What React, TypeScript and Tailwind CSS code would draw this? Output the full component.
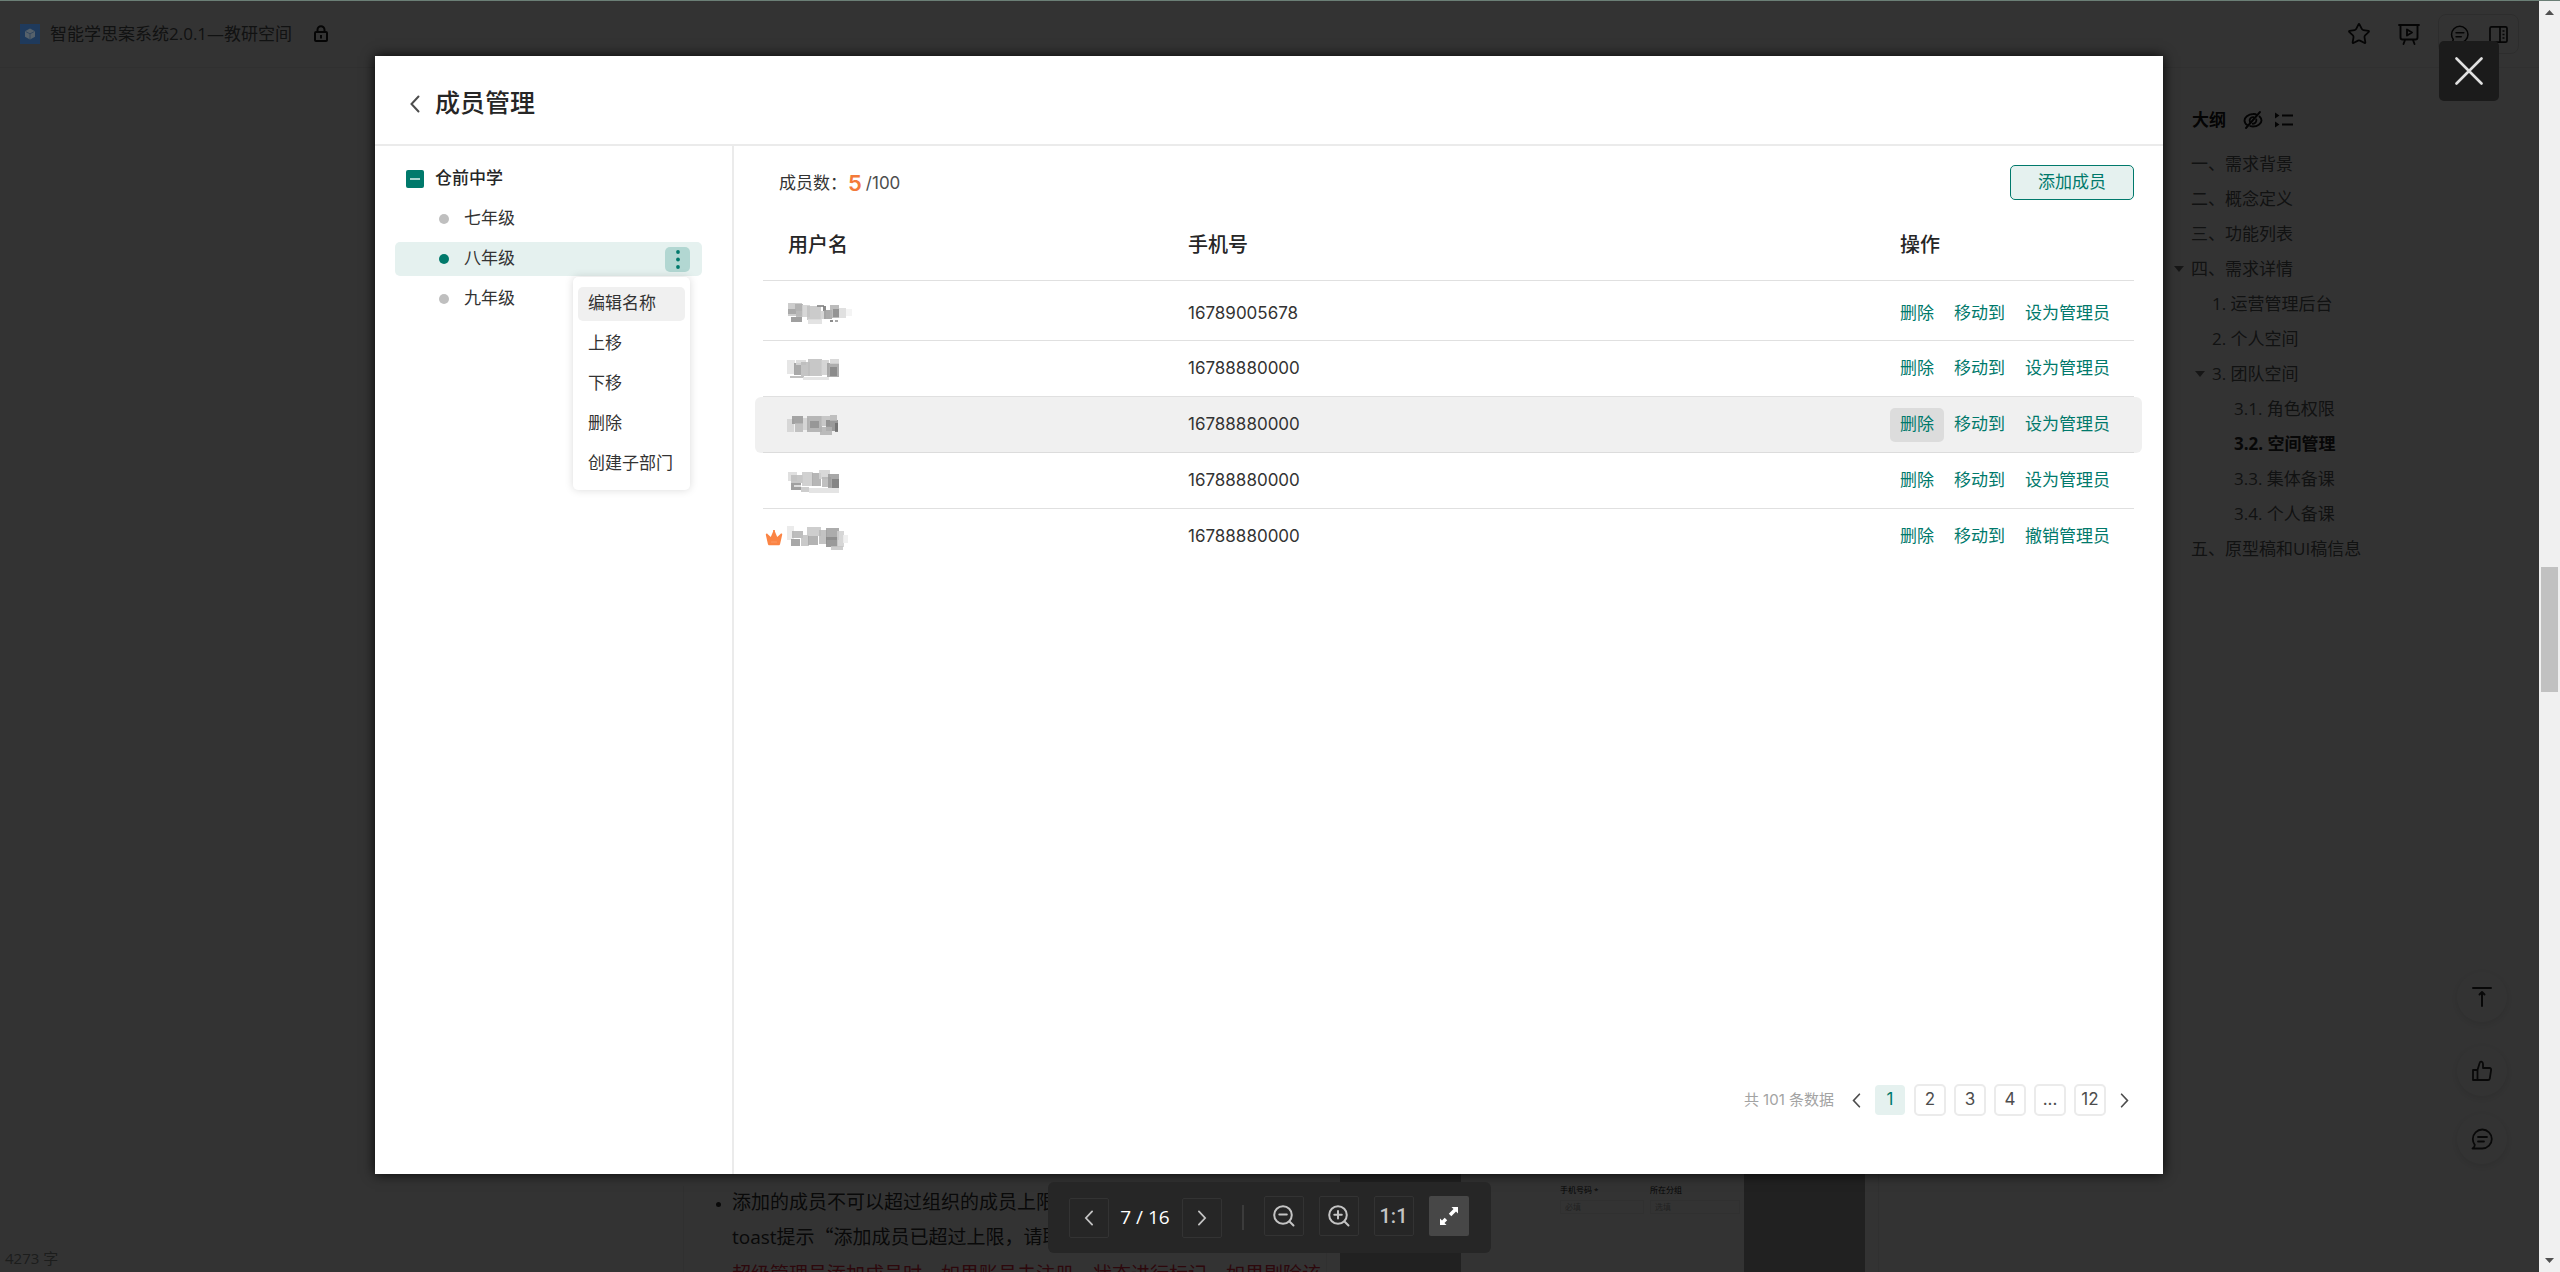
import React from "react";
import { Star } from "lucide-react";

const cjk = "font-['Inter','Noto_Sans_CJK_SC',sans-serif]";
const docFont = "font-['Open_Sans','Noto_Sans_CJK_SC',sans-serif]";

type OutlineItem = { label: string; level: 1 | 2 | 3; open?: boolean; current?: boolean };

const outline: OutlineItem[] = [
  { label: "一、需求背景", level: 1 },
  { label: "二、概念定义", level: 1 },
  { label: "三、功能列表", level: 1 },
  { label: "四、需求详情", level: 1, open: true },
  { label: "1. 运营管理后台", level: 2 },
  { label: "2. 个人空间", level: 2 },
  { label: "3. 团队空间", level: 2, open: true },
  { label: "3.1. 角色权限", level: 3 },
  { label: "3.2. 空间管理", level: 3, current: true },
  { label: "3.3. 集体备课", level: 3 },
  { label: "3.4. 个人备课", level: 3 },
  { label: "五、原型稿和UI稿信息", level: 1 },
];

const indent = { 1: "pl-0", 2: "pl-[21px]", 3: "pl-[43px]" };

/* x, y, width, height, grey level */
type Block = [number, number, number, number, string];

const members: { phone: string; admin?: boolean; hover?: boolean; blocks: Block[] }[] = [
  {
    phone: "16789005678",
    blocks: [
      [4, 3, 14, 13, "#c4c4c4"], [4, 9, 8, 5, "#a2a2a2"], [7, 17, 11, 5, "#8f8f8f"], [11, 4, 8, 7, "#adadad"],
      [12, 11, 7, 6, "#b4b4b4"], [18, 5, 8, 12, "#d0d0d0"], [23, 6, 14, 14, "#c2c2c2"], [24, 19, 14, 5, "#dedede"],
      [33, 5, 7, 2, "#888"], [39, 6, 3, 5, "#777"], [36, 11, 6, 8, "#cfcfcf"], [40, 10, 8, 9, "#9c9c9c"],
      [46, 5, 9, 13, "#b0b0b0"], [49, 9, 6, 8, "#8d8d8d"], [46, 20, 3, 2, "#777"], [51, 20, 3, 2, "#999"],
      [55, 8, 7, 10, "#dadada"], [62, 9, 6, 7, "#f2f2f2"],
    ],
  },
  {
    phone: "16788880000",
    blocks: [
      [3, 5, 8, 14, "#e2e2e2"], [10, 8, 7, 12, "#9a9a9a"], [12, 5, 10, 5, "#d8d8d8"], [17, 7, 9, 14, "#bababa"],
      [24, 4, 14, 17, "#bdbdbd"], [37, 5, 8, 15, "#cecece"], [43, 8, 12, 14, "#9f9f9f"], [46, 12, 7, 9, "#858585"],
      [6, 21, 14, 2, "#b5b5b5"], [19, 22, 26, 3, "#e0e0e0"], [46, 4, 9, 5, "#d2d2d2"],
    ],
  },
  {
    phone: "16788880000",
    hover: true,
    blocks: [
      [3, 8, 7, 13, "#d2d2d2"], [8, 5, 11, 8, "#979797"], [11, 12, 8, 9, "#b8b8b8"], [19, 7, 6, 12, "#d0d0d0"],
      [23, 5, 15, 16, "#ababab"], [26, 10, 9, 7, "#929292"], [37, 5, 9, 10, "#c0c0c0"], [42, 9, 12, 11, "#8a8a8a"],
      [46, 4, 7, 6, "#b6b6b6"], [36, 16, 12, 8, "#b1b1b1"], [51, 12, 3, 9, "#6d6d6d"],
    ],
  },
  {
    phone: "16788880000",
    blocks: [
      [4, 5, 9, 9, "#dadada"], [7, 8, 12, 8, "#bdbdbd"], [7, 16, 10, 7, "#8f8f8f"], [10, 18, 7, 2, "#e8e8e8"],
      [18, 5, 11, 14, "#c9c9c9"], [28, 6, 9, 13, "#a9a9a9"], [35, 3, 11, 9, "#d2d2d2"], [38, 10, 9, 10, "#b5b5b5"],
      [44, 7, 11, 14, "#999"], [48, 12, 7, 9, "#7f7f7f"], [17, 20, 8, 5, "#c4c4c4"], [25, 21, 30, 5, "#dfdfdf"],
    ],
  },
  {
    phone: "16788880000",
    admin: true,
    blocks: [
      [3, 3, 7, 14, "#e8e8e8"], [8, 8, 11, 7, "#b2b2b2"], [7, 16, 9, 7, "#999"], [17, 12, 8, 11, "#c0c0c0"],
      [23, 4, 14, 9, "#c6c6c6"], [24, 13, 10, 9, "#a6a6a6"], [35, 7, 8, 14, "#b9b9b9"], [42, 5, 13, 12, "#9d9d9d"],
      [42, 14, 12, 10, "#888"], [53, 8, 7, 16, "#cfcfcf"], [59, 12, 5, 8, "#ededed"], [47, 23, 12, 4, "#c4c4c4"],
    ],
  },
];

function MaskedName({ blocks }: { blocks: Block[] }) {
  return (
    <svg className="-ml-1 h-7 w-[70px]" viewBox="0 0 70 28" role="img" aria-label="用户名已隐藏">
      {blocks.map(([x, y, w, h, fill], i) => (
        <rect key={i} x={x} y={y} width={w} height={h} fill={fill} opacity={0.85} />
      ))}
    </svg>
  );
}

function Chevron({ dir, className }: { dir: "left" | "right"; className: string }) {
  return (
    <svg className={className} viewBox="0 0 10 18" fill="none" stroke="currentColor" strokeWidth="2" strokeLinecap="round">
      <path d={dir === "left" ? "M8.5 1.5 1.5 9l7 7.5" : "M1.5 1.5 8.5 9l-7 7.5"} />
    </svg>
  );
}

function CommentIcon({ className }: { className: string }) {
  return (
    <svg className={className} viewBox="0 0 22 22" fill="none" stroke="currentColor" strokeWidth="1.8" strokeLinecap="round" strokeLinejoin="round">
      <path d="M1.5 20.5h9.8a9.5 9.5 0 1 0-9.5-9.5c0 2.3.7 4.2 2 5.9 0 1.4-.8 2.6-2.3 3.6Z" />
      <path d="M7 9h9M7 13.5h6" />
    </svg>
  );
}

function DocumentPage() {
  return (
    <div className={`flex h-full flex-col overflow-hidden bg-white text-[17px] ${docFont}`}>
      <header className="flex h-[67px] shrink-0 items-center border-b border-[#f0f0f0] pl-5 pr-5">
        <span className="size-5" />
        <h1 className="ml-2.5 text-[#585a5a]">智能学思案系统2.0.1—教研空间</h1>
        <svg className="ml-5 size-[18px] text-[#1a1a1a]" viewBox="0 0 18 18" fill="none" stroke="currentColor" strokeWidth="2">
          <rect x="3" y="7" width="12" height="9" rx="1" />
          <path d="M5.5 7V4.8a3.5 3.5 0 0 1 7 0V7M9 10v3.5" />
        </svg>
        <div className="ml-auto flex items-center text-[#1a1a1a]">
          <button aria-label="收藏"><Star className="size-6" strokeWidth={1.8} /></button>
          <button aria-label="演示" className="ml-[26px]">
            <svg className="size-6" viewBox="0 0 24 24" fill="none" stroke="currentColor" strokeWidth="1.9" strokeLinecap="round" strokeLinejoin="round">
              <path d="M2 3h20M3.500 3v12.500a2 2 0 0 0 2 2h13a2 2 0 0 0 2-2V3M8 18l-1.500 4M16 18l1.500 4" />
              <path d="m10 7.500 5 3-5 3Z" />
            </svg>
          </button>
          <div className="ml-[17px] flex h-10 items-center rounded-lg border border-[#e0e0e0] pl-[11px] pr-[10px]">
            <button aria-label="评论"><CommentIcon className="size-[19px]" /></button>
            <button aria-label="侧栏" className="ml-5">
              <svg className="size-[19px]" viewBox="0 0 19 19" fill="none" stroke="currentColor" strokeWidth="1.7">
                <rect x="1" y="1.8" width="17" height="15.4" rx="1.5" />
                <path d="M11 2v15M13.500 6h2M13.500 9.500h2M13.500 13h2" />
              </svg>
            </button>
          </div>
        </div>
      </header>

      <div className="flex min-h-0 flex-1">
        <main className="flex min-w-0 flex-1 flex-col justify-end overflow-hidden">
          <div className="flex items-end pl-[683px] pr-[295px]">
            <div className="w-[644px] shrink-0 border-x border-[#eee] pl-[30px] text-[19px] leading-[33px] whitespace-nowrap text-[#303030]">
              <ul className="list-disc pl-[18px] marker:text-[13px]">
                <li>
                  添加的成员不可以超过组织的成员上限
                  <br />
                  toast提示<span className="font-['Noto_Sans_CJK_SC',sans-serif]">“</span>添加成员已超过上限，请联系管理员
                </li>
              </ul>
              <p className="mt-1 h-3.5 pl-[18px] text-[#df2a3f]">
                超级管理员添加成员时，如果账员未注册，状态进行标记，如果剔除该
              </p>
            </div>
            <div className="min-w-0 flex-1 border-r border-[#eee] px-[13px]">
              <div className="flex h-[98px] bg-[#a5a5a5] px-[121px]">
                <div className="flex flex-1 justify-end gap-1.5 bg-white pr-1 pt-3 text-[8px] leading-none text-[#222]">
                  <div className="w-[84px]">
                    <span>手机号码 *</span>
                    <div className="mt-1.5 h-[14px] border border-[#eee] px-1 leading-3 text-[#aaa]">必填</div>
                  </div>
                  <div className="w-[90px]">
                    <span>所在分组</span>
                    <div className="mt-1.5 h-[14px] border border-[#eee] px-1 leading-3 text-[#aaa]">选填</div>
                  </div>
                </div>
              </div>
            </div>
          </div>
        </main>

        <aside className="flex w-[365px] shrink-0 flex-col pt-[38px] text-[#585a5a]">
          <div className="flex h-7 items-center pl-[18px] text-[#151515]">
            <h2 className="font-bold">大纲</h2>
            <button aria-label="隐藏大纲" className="ml-[17px]">
              <svg className="size-5" viewBox="0 0 20 20" fill="none" stroke="currentColor" strokeWidth="1.9" strokeLinecap="round">
                <path d="M17 2 3 18M12.800 4.200A9 9 0 0 0 10 4c-5 0-8.500 4-8.500 6.500 0 1.700 1 3.500 3 4.800M16.500 6.500c1.300 1.200 2 2.700 2 4 0 2.500-3.500 6-8.500 6-1 0-1.800-.1-2.600-.3" />
                <path d="M7 12a3.300 3.300 0 0 1 3.500-4.800M13.300 9.500a3.400 3.400 0 0 1-3.500 4.200" />
              </svg>
            </button>
            <button aria-label="展开层级" className="ml-3">
              <svg className="size-[18px]" viewBox="0 0 18 18" fill="currentColor">
                <path d="M0 1.500 4.500 4.500 0 7.500ZM0 10.500l4.500 3-4.500 3ZM7 3.500h11v2H7ZM7 12.500h11v2H7Z" />
              </svg>
            </button>
          </div>
          <nav className="mt-3 pl-[17px]">
            <ul>
              {outline.map((item) => (
                <li key={item.label} className={`flex h-[35px] items-center ${indent[item.level]}`}>
                  {item.open && (
                    <svg className="-ml-[17px] mr-[7px] h-[6px] w-[10px]" viewBox="0 0 10 6" fill="#707070">
                      <path d="M0 0h10L5 6Z" />
                    </svg>
                  )}
                  <a href="#" className={item.current ? "font-bold text-[#262626]" : ""}>{item.label}</a>
                </li>
              ))}
            </ul>
          </nav>
        </aside>
      </div>

      <span className="absolute bottom-0.5 left-[5px] text-[15px] leading-6 text-[#8a8f8d]">4273 字</span>

      <div className="absolute bottom-[108px] right-[32px] flex flex-col text-[#2a2a2a]">
        <button aria-label="返回顶部" className="flex size-[50px] items-center justify-center rounded-full bg-white shadow-[0_2px_10px_rgba(0,0,0,0.12)]">
          <svg className="size-[22px]" viewBox="0 0 22 22" fill="none" stroke="currentColor" strokeWidth="2" strokeLinecap="round" strokeLinejoin="round">
            <path d="M2 2h18M11 20V6.500M8.500 8.500 11 6l2.500 2.500" />
          </svg>
        </button>
        <button aria-label="点赞" className="mt-6 flex size-[50px] items-center justify-center rounded-full bg-white shadow-[0_2px_10px_rgba(0,0,0,0.12)]">
          <svg className="size-[22px]" viewBox="0 0 22 22" fill="none" stroke="currentColor" strokeWidth="1.8" strokeLinejoin="round">
            <path d="M2 10h4.500v10H2ZM6.500 10 8.800 2.500c.2-.8 1-1 1.700-.8 1 .4 1.500 1.200 1.500 2.200V8h6.500c1.200 0 1.800 1 1.600 2l-1.300 8.500c-.2 1-.8 1.500-1.700 1.500H6.500" />
          </svg>
        </button>
        <button aria-label="评论列表" className="mt-[18px] flex size-[50px] items-center justify-center rounded-full bg-white shadow-[0_2px_10px_rgba(0,0,0,0.12)]">
          <CommentIcon className="size-[22px]" />
        </button>
      </div>
    </div>
  );
}

const menuItems = ["编辑名称", "上移", "下移", "删除", "创建子部门"];
const grades = ["七年级", "八年级", "九年级"];

function Departments() {
  return (
    <aside className="w-[359px] shrink-0 border-r-2 border-[#ebebeb] pl-5 pr-[30px] pt-4">
      <div className="flex h-[34px] items-center pl-[11px]">
        <button aria-label="收起" className="flex size-[18px] items-center justify-center rounded-xs bg-[#00796b]">
          <span className="h-0.5 w-2.5 bg-[#a6d2cc]" />
        </button>
        <span className="ml-[11px] font-medium text-[#262626]">仓前中学</span>
      </div>
      <ul className="mt-1.5 flex flex-col gap-1.5">
        {grades.map((grade) => {
          const active = grade === "八年级";
          return (
            <li
              key={grade}
              className={
                active
                  ? "relative z-10 flex h-[34px] items-center rounded-[5px] bg-[#e5f1ef] pl-[44px] pr-3"
                  : "flex h-[34px] items-center pl-[44px] pr-3"
              }
            >
              <span className={active ? "size-2.5 rounded-full bg-[#00796b]" : "size-2.5 rounded-full bg-[#bfbfbf]"} />
              <button className="ml-[15px]">{grade}</button>
              {active && (
                <>
                  <button aria-label="更多" className="ml-auto flex size-[25px] items-center justify-center rounded-[5px] bg-[#b2d7d2]">
                    <svg className="h-[19px] w-1" viewBox="0 0 4 19" fill="#00796b">
                      <circle cx="2" cy="2" r="1.9" />
                      <circle cx="2" cy="9.5" r="1.9" />
                      <circle cx="2" cy="17" r="1.9" />
                    </svg>
                  </button>
                  <div role="menu" className="absolute right-3 top-[35px] flex w-[117px] flex-col gap-1.5 rounded-[5px] bg-white px-[5px] pb-[9px] pt-2.5 shadow-[0_0_8px_rgba(0,0,0,0.15)]">
                    {menuItems.map((label, i) => (
                      <button
                        role="menuitem"
                        key={label}
                        className={
                          i === 0
                            ? "h-[34px] rounded-[5px] bg-[#f0f0f0] pl-2.5 text-left whitespace-nowrap"
                            : "h-[34px] rounded-[5px] pl-2.5 text-left whitespace-nowrap"
                        }
                      >
                        {label}
                      </button>
                    ))}
                  </div>
                </>
              )}
            </li>
          );
        })}
      </ul>
    </aside>
  );
}

function MemberTable() {
  return (
    <table className="mt-2.5 w-full table-fixed border-separate border-spacing-0 text-left">
      <colgroup>
        <col className="w-[31%]" />
        <col />
        <col className="w-[244px]" />
      </colgroup>
      <thead>
        <tr className="h-[71px] text-xl text-[#262626] [&>th]:border-b [&>th]:border-[#e0e0e0] [&>th]:p-0 [&>th]:font-medium">
          <th className="!pl-[25px]">用户名</th>
          <th>手机号</th>
          <th className="!pl-2.5">操作</th>
        </tr>
      </thead>
      <tbody>
        {members.map((m, i) => {
          const last = i === members.length - 1;
          const line = last ? "" : m.hover ? "border-b border-[#dcdcdc]" : "border-b border-[#e0e0e0]";
          const pad = i === 0 ? "pt-1.5" : "";
          return (
            <tr key={i} className={i === 0 ? "h-[60px]" : m.hover ? "h-14 bg-[#f0f0f0]" : "h-14"}>
              <td
                className={`${line} ${pad} ${
                  m.hover
                    ? "relative before:absolute before:-left-2 before:-bottom-px before:top-0 before:w-2 before:rounded-l-md before:bg-[#f0f0f0]"
                    : ""
                }`}
              >
                <div className="flex items-center">
                  <span className="w-[25px] pl-0.5">
                    {m.admin && (
                      <svg className="h-[17px] w-[18px]" viewBox="0 0 18 17" role="img" aria-label="管理员">
                        <path
                          d="M1.3 4.8c.4-.3.8-.2 1.2.1L5.8 8l2.300-5.600a1 1 0 1 1 1.800 0L12.200 8l3.300-3.100c.9-.6 2-.2 1.700.9l-2.100 9.200c-.2.9-.7 1.300-1.500 1.300H4.400c-.8 0-1.300-.4-1.500-1.300L.8 5.800c-.1-.4.1-.8.5-1Z"
                          fill="#fb8444"
                        />
                        <path d="M6.500 13h5" stroke="#fb9a66" strokeWidth="1.2" strokeLinecap="round" />
                      </svg>
                    )}
                  </span>
                  <MaskedName blocks={m.blocks} />
                </div>
              </td>
              <td className={`${line} ${pad}`}>{m.phone}</td>
              <td
                className={`${line} ${pad} ${
                  m.hover
                    ? "relative before:absolute before:-right-2 before:-bottom-px before:top-0 before:w-2 before:rounded-r-md before:bg-[#f0f0f0]"
                    : ""
                }`}
              >
                <div className="flex whitespace-nowrap text-[#00796b]">
                  <button className={m.hover ? "h-[34px] rounded-[5px] bg-[#dcdcdc] px-2.5" : "h-[34px] px-2.5"}>删除</button>
                  <button className="h-[34px] px-2.5">移动到</button>
                  <button className="h-[34px] px-2.5">{m.admin ? "撤销管理员" : "设为管理员"}</button>
                </div>
              </td>
            </tr>
          );
        })}
      </tbody>
    </table>
  );
}

function Pagination() {
  return (
    <nav aria-label="分页" className="mt-auto flex items-center gap-2 self-end text-[#4d4d4d]">
      <span className="mr-1 text-[15px] text-[#a3a3a3]">共 101 条数据</span>
      <button aria-label="上一页" className="flex w-5 justify-center"><Chevron dir="left" className="h-[15px] w-[9px]" /></button>
      {["1", "2", "3", "4", "...", "12"].map((p) => (
        <button
          key={p}
          className={
            p === "1"
              ? "size-8 rounded-[5px] border border-transparent bg-[#e5f1ef] bg-clip-padding text-[#00796b]"
              : "size-8 rounded-[5px] border-2 border-[#ebebeb]"
          }
        >
          {p}
        </button>
      ))}
      <button aria-label="下一页" className="flex w-5 justify-center"><Chevron dir="right" className="h-[15px] w-[9px]" /></button>
    </nav>
  );
}

function MemberDialog() {
  return (
    <section
      role="dialog"
      aria-label="成员管理"
      className={`flex min-h-0 flex-1 flex-col bg-white text-[17px] text-[#333] shadow-[0_0_12px_rgba(0,0,0,0.9)] ${cjk}`}
    >
      <header className="flex h-[90px] shrink-0 items-center border-b-2 border-[#ebebeb] pl-[35px] pt-2">
        <button aria-label="返回" className="text-[#4d4d4d]"><Chevron dir="left" className="h-[18px] w-2.5" /></button>
        <h2 className="ml-[15px] text-[25px] font-medium text-[#262626]">成员管理</h2>
      </header>
      <div className="flex min-h-0 flex-1">
        <Departments />
        <div className="flex min-w-0 flex-1 flex-col pb-[58px] pl-[29px] pr-[29px] pt-[19px]">
          <div className="flex h-[35px] items-center justify-between pl-4">
            <p className="flex items-center pt-0.5">
              成员数：
              <strong className="ml-px text-[22px] font-semibold text-[#f37a3a]">5</strong>
              <span className="ml-1 text-[#4d4d4d]">/100</span>
            </p>
            <button className="h-[35px] w-[124px] rounded-[5px] border border-[#00796b] bg-[#e5f1ef] pt-px text-[#00796b]">添加成员</button>
          </div>
          <MemberTable />
          <Pagination />
        </div>
      </div>
    </section>
  );
}

const toolButton = "flex size-10 items-center justify-center rounded-xs border border-[#333]";

function ViewerToolbar() {
  return (
    <div className={`flex h-[71px] items-center rounded-md bg-[#262626] pl-[21px] pr-[22px] text-[#c4c4c4] ${docFont}`}>
      <button aria-label="上一张" className={toolButton}><Chevron dir="left" className="h-4 w-2.5" /></button>
      <span className="w-[73px] text-center text-[19px] text-white">7 / 16</span>
      <button aria-label="下一张" className={toolButton}><Chevron dir="right" className="h-4 w-2.5" /></button>
      <span className="mx-5 h-[25px] w-0.5 bg-[#3b3b3b]" />
      <div className="flex gap-[15px] pb-[3px]">
        <button aria-label="缩小" className={toolButton}>
          <svg className="size-[22px]" viewBox="0 0 22 22" fill="none" stroke="currentColor" strokeWidth="2" strokeLinecap="round">
            <circle cx="10" cy="10" r="8.8" />
            <path d="m16.500 16.500 4 4M6.300 9.500h7.500" />
          </svg>
        </button>
        <button aria-label="放大" className={toolButton}>
          <svg className="size-[22px]" viewBox="0 0 22 22" fill="none" stroke="currentColor" strokeWidth="2" strokeLinecap="round">
            <circle cx="10" cy="10" r="8.8" />
            <path d="m16.500 16.500 4 4M6.300 9.800h7.500M10 6v7.500" />
          </svg>
        </button>
        <button className={`${toolButton} font-['Roboto',sans-serif] text-xl font-medium`}>1:1</button>
        <button aria-label="适应屏幕" className="flex size-10 items-center justify-center rounded-xs bg-[#474747] text-white">
          <svg className="size-[22px]" viewBox="0 0 22 22" fill="currentColor">
            <path d="M20 2v6.500l-2-2-4.700 4.700-2.500-2.500 4.700-4.700-2-2ZM2 20v-6.500l2 2 2.700-2.700 2.500 2.500L6.500 18l2 2Z" />
          </svg>
        </button>
      </div>
    </div>
  );
}

export default function App() {
  return (
    <div className="flex h-screen w-full flex-col overflow-hidden">
      <div className="h-px shrink-0 bg-[#6b7f76]" />
      <div className="flex min-h-0 flex-1">
        <div className="relative min-w-0 flex-1">
          <DocumentPage />
          <div className="absolute inset-0 flex flex-col bg-black/80 pl-[375px] pr-[376px] pt-[55px]">
            <MemberDialog />
            <div className="flex h-[98px] shrink-0 items-start justify-center pt-2">
              <ViewerToolbar />
            </div>
          </div>
          <svg className="absolute left-5 top-[23px] size-5" viewBox="0 0 20 20" role="img" aria-label="文档">
            <rect width="20" height="20" fill="#1f3a5c" />
            <path d="m10 4.500 5 2.700v5.600l-5 2.700-5-2.700V7.200Z" fill="#56616b" />
            <path d="m5.500 7.500 4.500 2.300 4.500-2.300M10 9.800V15" fill="none" stroke="#34485f" strokeWidth="1" />
          </svg>
          <button aria-label="关闭" className="absolute right-10 top-10 flex size-[60px] items-center justify-center rounded-[5px] bg-[#1b1b1b]">
            <svg className="size-7" viewBox="0 0 28 28" fill="none" stroke="#e0e0e0" strokeWidth="2.6" strokeLinecap="round">
              <path d="m1.500 1.500 25 25M26.500 1.500l-25 25" />
            </svg>
          </button>
        </div>
        <div className="flex w-[21px] shrink-0 flex-col items-center justify-between bg-[#f0f0f0] py-[9px]">
          <svg className="h-[5px] w-[9px]" viewBox="0 0 9 5" fill="#505050"><path d="M4.500 0 9 5H0Z" /></svg>
          <div className="flex min-h-0 w-[17px] flex-1 flex-col">
            <div className="flex-[552]" />
            <div className="h-[125px] bg-[#c1c1c1]" />
            <div className="flex-[566]" />
          </div>
          <svg className="h-[5px] w-[9px]" viewBox="0 0 9 5" fill="#505050"><path d="M0 0h9L4.500 5Z" /></svg>
        </div>
      </div>
    </div>
  );
}
